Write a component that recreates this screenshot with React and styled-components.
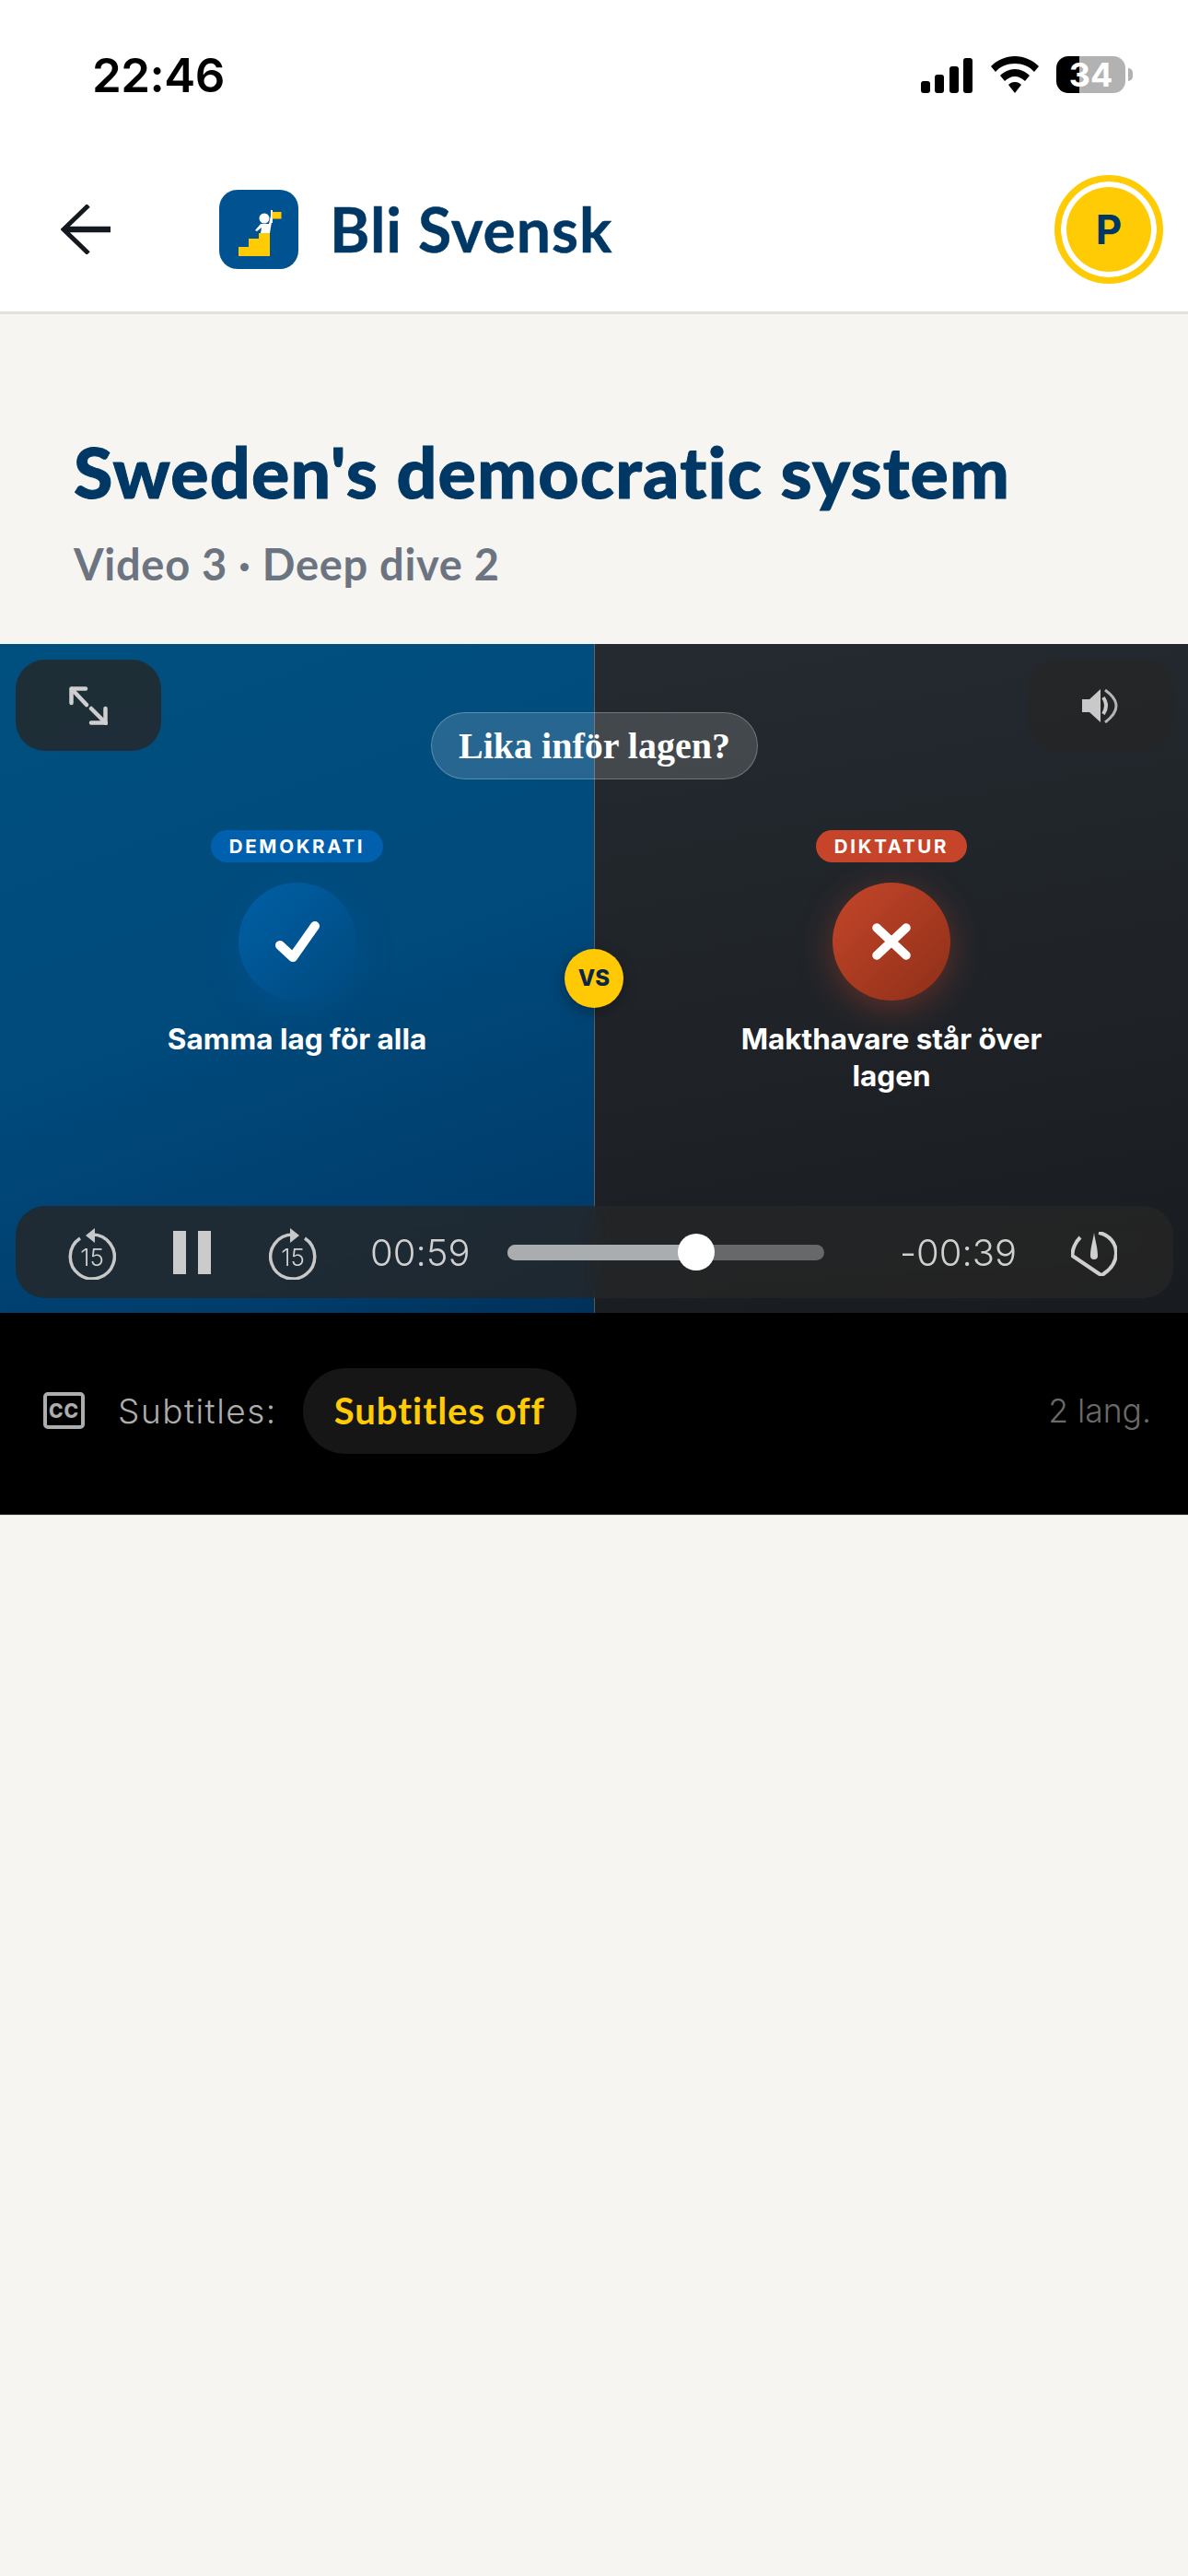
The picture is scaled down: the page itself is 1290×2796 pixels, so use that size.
import React from "react";
import styled, { createGlobalStyle } from "styled-components";

const GlobalStyle = createGlobalStyle`
    * { box-sizing: border-box; }
    html, body { margin: 0; padding: 0; background: #f7f5f1; }
`;

const Page = styled.div`
    width: 1290px;
    min-height: 2796px;
    background: #f7f5f1;
    font-family: Lato, "Noto Sans", sans-serif;
    font-variant-ligatures: none;
    overflow: hidden;
`;

// status bar
const StatusBar = styled.div`
    height: 159px;
    background: #fff;
    display: flex;
    justify-content: space-between;
    padding: 53px 68px 0 100px;
`;

const Clock = styled.div`
    font-family: Inter, sans-serif;
    font-weight: 600;
    font-size: 51px;
    line-height: 57px;
    letter-spacing: -0.5px;
    color: #000;
`;

const StatusIcons = styled.div`
    display: flex;
    align-items: flex-start;
    gap: 18px;
    padding-top: 8px;
`;

const Battery = styled.div`
    position: relative;
    width: 75px;
    height: 40px;
    border-radius: 13px;
    background: linear-gradient(90deg, #000 33%, #b2b2b2 33%);
    color: #fff;
    font-family: Inter, sans-serif;
    font-weight: 700;
    font-size: 36px;
    line-height: 40px;
    text-align: center;
    &::after {
        content: "";
        position: absolute;
        right: -8px;
        top: 13px;
        width: 5px;
        height: 14px;
        border-radius: 0 5px 5px 0;
        background: #b2b2b2;
    }
`;

// top nav
const Nav = styled.header`
    height: 182px;
    background: #fff;
    border-bottom: 3px solid #e2e0da;
    display: flex;
    align-items: center;
    padding: 0 27px 0 66px;
`;

const Brand = styled.div`
    display: flex;
    align-items: center;
    gap: 34px;
    margin-left: 118px;
    flex: 1;
`;

const BrandName = styled.span`
    font-family: Lato, sans-serif;
    font-weight: 700;
    font-size: 66px;
    letter-spacing: 1px;
    -webkit-text-stroke: 0.5px #003865;
    color: #003865;
`;

const Avatar = styled.div`
    width: 118px;
    height: 118px;
    border-radius: 50%;
    background: #ffcb05;
    border: 7px solid #ffcb05;
    box-shadow: inset 0 0 0 6px #fff;
    display: flex;
    align-items: center;
    justify-content: center;
    color: #003865;
    font-family: Inter, sans-serif;
    font-weight: 700;
    font-size: 44px;
`;

// title block
const TitleBlock = styled.section`
    height: 358px;
    padding: 125px 80px 0;
`;

const Heading = styled.h1`
    margin: 0;
    font-family: Lato, sans-serif;
    font-weight: 900;
    font-size: 77px;
    line-height: 90px;
    letter-spacing: 1.2px;
    -webkit-text-stroke: 1px #003865;
    white-space: nowrap;
    color: #003865;
`;

const Subheading = styled.p`
    margin: 28px 0 0;
    font-family: Lato, sans-serif;
    font-weight: 700;
    font-size: 47px;
    line-height: 56px;
    letter-spacing: 0.7px;
    color: #6b7480;
`;

// video player
const Player = styled.section`
    position: relative;
    height: 726px;
    display: grid;
    grid-template-columns: 1fr 1fr;
`;

const Side = styled.div`
    display: flex;
    flex-direction: column;
    align-items: center;
    padding-top: 202px;
    background: ${(p) =>
        p.$tone === "blue"
            ? "linear-gradient(160deg, #00507f 0%, #004a7c 50%, #003d6c 85%, #003059 100%)"
            : "linear-gradient(170deg, #242a30 0%, #1f2328 55%, #181c20 100%)"};
    border-left: ${(p) => (p.$tone === "blue" ? "none" : "1px solid rgba(255,255,255,.28)")};
`;

const Badge = styled.div`
    height: 35px;
    padding: 0 20px;
    border-radius: 18px;
    background: ${(p) => (p.$tone === "blue" ? "#0060ad" : "#c6442a")};
    color: #fff;
    font-family: Inter, sans-serif;
    font-weight: 700;
    font-size: 20.5px;
    line-height: 35px;
    letter-spacing: 2.7px;
`;

const Verdict = styled.div`
    width: 128px;
    height: 128px;
    margin-top: 22px;
    border-radius: 50%;
    display: flex;
    align-items: center;
    justify-content: center;
    background: ${(p) =>
        p.$tone === "blue"
            ? "linear-gradient(135deg, #0060a6, #004d85 80%)"
            : "linear-gradient(135deg, #c4462a, #8e2f18)"};
    box-shadow: ${(p) =>
        p.$tone === "blue"
            ? "0 10px 40px rgba(0,96,173,.3)"
            : "0 8px 36px rgba(198,68,42,.4)"};
`;

const Claim = styled.div`
    margin-top: 22px;
    max-width: 380px;
    text-align: center;
    color: #fff;
    font-family: Inter, sans-serif;
    font-weight: 700;
    font-size: 31.5px;
    line-height: 40px;
`;

const Question = styled.div`
    position: absolute;
    top: 74px;
    left: 468px;
    width: 355px;
    height: 73px;
    border-radius: 37px;
    border: 1px solid rgba(255,255,255,.25);
    background: rgba(255,255,255,.15);
    color: #fff;
    font-family: "Liberation Serif", serif;
    font-weight: 700;
    font-size: 40px;
    line-height: 71px;
    text-align: center;
`;

const Versus = styled.div`
    position: absolute;
    top: 331px;
    left: 613px;
    width: 64px;
    height: 64px;
    border-radius: 50%;
    background: #ffc905;
    box-shadow: 0 4px 16px rgba(0,0,0,.35);
    color: #0b2545;
    font-family: Inter, sans-serif;
    font-weight: 800;
    font-size: 24px;
    line-height: 64px;
    text-align: center;
`;

const GlassButton = styled.button`
    position: absolute;
    top: 17px;
    ${(p) => (p.$right ? "right: 16px;" : "left: 17px;")}
    width: 158px;
    height: 99px;
    padding: 0;
    border: none;
    border-radius: 32px;
    background: rgba(38,38,38,.8);
    display: flex;
    align-items: center;
    justify-content: center;
`;

const Controls = styled.div`
    position: absolute;
    left: 17px;
    right: 16px;
    top: 610px;
    height: 100px;
    border-radius: 32px;
    background: rgba(38,38,38,.8);
    backdrop-filter: blur(14px);
    display: flex;
    align-items: center;
    padding: 0 61px 0 57px;
    color: #ccc;
`;

const Pause = styled.div`
    display: flex;
    gap: 13px;
    margin-left: 62px;
    &::before, &::after {
        content: "";
        width: 14px;
        height: 47px;
        background: #cbcbcb;
    }
`;

const SkipWrap = styled.div`
    display: flex;
    margin-left: ${(p) => p.$gap}px;
`;

const Time = styled.span`
    font-family: Inter, sans-serif;
    font-weight: 300;
    font-size: 40px;
    line-height: 44px;
    margin-top: 2px;
    width: ${(p) => p.$w}px;
    margin-left: ${(p) => p.$gap}px;
    white-space: nowrap;
    color: #d0d0d0;
`;

const Track = styled.div`
    position: relative;
    width: 344px;
    height: 17px;
    margin-left: 39px;
    border-radius: 9px;
    background: #666869;
`;

const TrackFill = styled.div`
    height: 100%;
    border-radius: 9px 0 0 9px;
    background: #a9adaf;
`;

const Thumb = styled.div`
    position: absolute;
    top: -12px;
    width: 40px;
    height: 40px;
    margin-left: -20px;
    border-radius: 50%;
    background: #fff;
`;

// subtitle row under the video
const SubtitleBar = styled.div`
    height: 220px;
    background: #000;
    border-bottom: 1px solid #d8d6d0;
    display: flex;
    align-items: center;
    padding: 0 40px 7px 47px;
`;

const SubtitleLabel = styled.span`
    margin-left: 36px;
    font-family: Inter, sans-serif;
    font-weight: 300;
    font-size: 37px;
    letter-spacing: 1.5px;
    color: #adadad;
`;

const SubtitlePill = styled.div`
    width: 297px;
    height: 93px;
    margin-left: 28px;
    border-radius: 47px;
    background: #161616;
    color: #ffcb05;
    font-family: Lato, sans-serif;
    font-weight: 700;
    font-size: 40px;
    letter-spacing: 1px;
    line-height: 93px;
    text-align: center;
`;

const LangCount = styled.span`
    margin-left: auto;
    font-family: Inter, sans-serif;
    font-weight: 300;
    font-size: 35.5px;
    color: #6a6a6a;
`;

const SignalIcon = () => (
    <svg width="57" height="38" viewBox="0 0 57 38" style={{ marginTop: 2 }}>
        <rect x="0" y="25" width="10" height="13" rx="3" />
        <rect x="15" y="18" width="10" height="20" rx="3" />
        <rect x="31" y="9" width="10" height="29" rx="3" />
        <rect x="46" y="0" width="10" height="38" rx="3" />
    </svg>
);

const WifiIcon = () => (
    <svg width="54" height="40" viewBox="0 0 54 40">
        <path d="M27 0C17 0 8 4 1 11l5 6C11 11 19 8 27 8s16 3 21 9l5-6C46 4 37 0 27 0Z" />
        <path d="M27 14c-6 0-12 3-16 7l5 6c3-3 7-5 11-5s8 2 11 5l5-6c-4-4-10-7-16-7Z" />
        <path d="M27 28c-3 0-5 1-7 3l7 9 7-9c-2-2-4-3-7-3Z" />
    </svg>
);

const BackArrow = () => (
    <svg width="54" height="54" viewBox="0 0 54 54" fill="none" stroke="#14191f">
        <path d="M54 27H5" strokeWidth="6.5" />
        <path d="M30 1 3 27l27 26" strokeWidth="5" />
    </svg>
);

const Logo = () => (
    <svg width="86" height="86" viewBox="0 0 86 86">
        <rect width="86" height="86" rx="20" fill="#005291" />
        <path d="M21 62h11v-9h11v-6h12v25H21Z" fill="#ffcb05" />
        <circle cx="49" cy="31" r="5.5" fill="#fff" />
        <path d="M39 44l6-7h9l2-9 2 1-2 12-1 6H45l1-6-5 4Z" fill="#fff" />
        <path d="M56 22h2v14h-2Z" fill="#fff" />
        <rect x="57.5" y="24" width="10" height="7.5" fill="#ffcb05" />
    </svg>
);

const ExpandIcon = () => (
    <svg width="42" height="42" viewBox="0 0 42 42" fill="none" stroke="#cfcfcf" strokeWidth="4.5" strokeLinecap="round" strokeLinejoin="round">
        <path d="M2.5 18V2.5H18" />
        <path d="M3 3l16 17" />
        <path d="M24 24l16 16" />
        <path d="M39.5 24v15.5H24" />
    </svg>
);

const VolumeIcon = () => (
    <svg width="41" height="38" viewBox="0 0 41 38" fill="none">
        <path d="M0 12h8L20 1v36L8 26H0Z" fill="#c9c9c9" />
        <path d="M23 10q6 9 0 18" stroke="#c9c9c9" strokeWidth="4" />
        <path d="M25 2q24 17 0 35" stroke="#b5b5b5" strokeWidth="3" />
    </svg>
);

const SkipIcon = ({ forward }) => (
    <svg width="52" height="56" viewBox="0 0 52 56" fill="none" style={{ marginTop: 4 }}>
        <g transform={forward ? "translate(52 0) scale(-1 1)" : undefined}>
            <path d="M13 11A24 24 0 1 0 26 7" stroke="#c8c8c8" strokeWidth="3.5" />
            <path d="M29 0 19 8l10 8Z" fill="#c8c8c8" />
        </g>
        <text x="26" y="41" textAnchor="middle" fill="#d0d0d0" fontFamily="Inter, sans-serif" fontWeight="300" fontSize="26">15</text>
    </svg>
);

const SpeedIcon = () => (
    <svg width="50" height="48" viewBox="0 0 50 48" fill="none" style={{ marginLeft: 62, marginTop: 4 }}>
        <path
            d="M10 6C5 11 1 19 1.5 26L31 46q2 1 4 0C44 40 49 32 49 23 49 12 41 3 30 1"
            stroke="#cfcfcf"
            strokeWidth="4"
            strokeLinejoin="round"
        />
        <path d="M25 1c1 8 4 16 4 25a4 4 0 0 1-8 0c0-9 3-17 4-25Z" fill="#cfcfcf" />
    </svg>
);

const CcIcon = () => (
    <svg width="45" height="40" viewBox="0 0 45 40" fill="none">
        <rect x="2" y="2" width="41" height="36" rx="3" stroke="#adadad" strokeWidth="4" />
        <text x="22.5" y="28" textAnchor="middle" fill="#adadad" fontFamily="Inter, sans-serif" fontWeight="800" fontSize="21" letterSpacing="1">CC</text>
    </svg>
);

const App = () => {
    const progress = 59.7;

    return (
        <Page>
            <GlobalStyle />
            <StatusBar>
                <Clock>22:46</Clock>
                <StatusIcons>
                    <SignalIcon />
                    <WifiIcon />
                    <Battery>34</Battery>
                </StatusIcons>
            </StatusBar>

            <Nav>
                <BackArrow />
                <Brand>
                    <Logo />
                    <BrandName>Bli Svensk</BrandName>
                </Brand>
                <Avatar>P</Avatar>
            </Nav>

            <TitleBlock>
                <Heading>Sweden's democratic system</Heading>
                <Subheading>Video 3 · Deep dive 2</Subheading>
            </TitleBlock>

            <Player>
                <Side $tone="blue">
                    <Badge $tone="blue">DEMOKRATI</Badge>
                    <Verdict $tone="blue">
                        <svg width="50" height="44" viewBox="0 0 50 44" fill="none" stroke="#fff" strokeWidth="10" strokeLinecap="round" strokeLinejoin="round">
                            <path d="M6 26l14 13L44 5" />
                        </svg>
                    </Verdict>
                    <Claim>Samma lag för alla</Claim>
                </Side>
                <Side $tone="dark">
                    <Badge $tone="red">DIKTATUR</Badge>
                    <Verdict $tone="red">
                        <svg width="44" height="40" viewBox="0 0 44 40" fill="none" stroke="#fff" strokeWidth="9.5" strokeLinecap="round">
                            <path d="M6 5l32 30" />
                            <path d="M38 5 6 35" />
                        </svg>
                    </Verdict>
                    <Claim>Makthavare står över lagen</Claim>
                </Side>

                <Question>Lika inför lagen?</Question>
                <Versus>VS</Versus>
                <GlassButton><ExpandIcon /></GlassButton>
                <GlassButton $right><VolumeIcon /></GlassButton>

                <Controls>
                    <SkipIcon />
                    <Pause />
                    <SkipWrap $gap={63}><SkipIcon forward /></SkipWrap>
                    <Time $w={110} $gap={58}>00:59</Time>
                    <Track>
                        <TrackFill style={{ width: `${progress}%` }} />
                        <Thumb style={{ left: `${progress}%` }} />
                    </Track>
                    <Time $w={124} $gap={82}>-00:39</Time>
                    <SpeedIcon />
                </Controls>
            </Player>

            <SubtitleBar>
                <CcIcon />
                <SubtitleLabel>Subtitles:</SubtitleLabel>
                <SubtitlePill>Subtitles off</SubtitlePill>
                <LangCount>2 lang.</LangCount>
            </SubtitleBar>
        </Page>
    );
};

export default App;
